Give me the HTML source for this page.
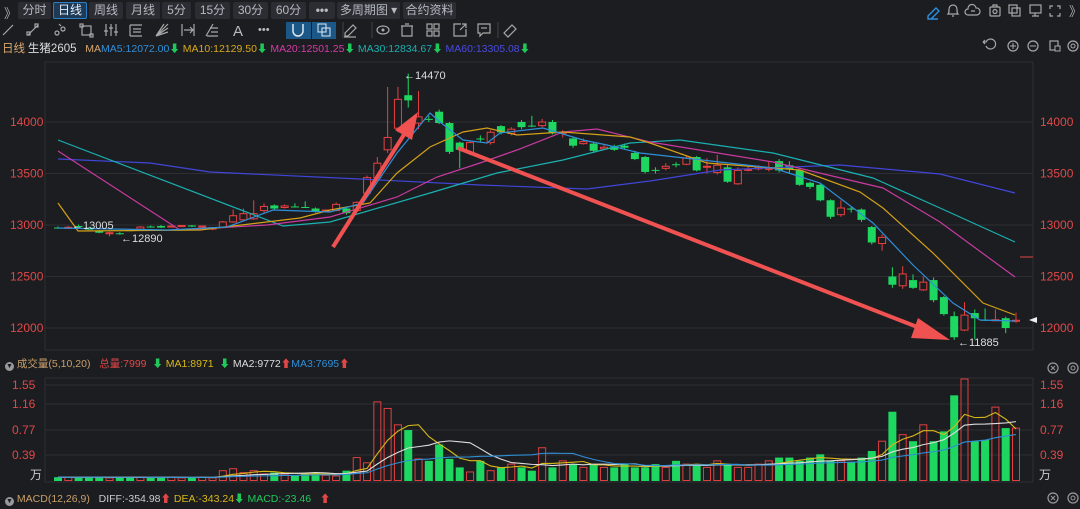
<!DOCTYPE html>
<html><head><meta charset="utf-8">
<style>
body{margin:0;width:1080px;height:509px;background:#1c1d21;overflow:hidden;font-family:"Liberation Sans","Noto Sans CJK SC",sans-serif;position:relative}
.b{position:absolute;top:2px;height:17px;background:#2b2d32;color:#b5b9c0;font-size:12px;line-height:17px;text-align:center;border-radius:2px}
.b.a{background:#1d3a57;border:1px solid #2d7fc5;color:#e8eef5;height:15px;line-height:15px}
.t{position:absolute;font-size:10.5px;white-space:nowrap}
.c{display:inline-block;width:9px;height:9px;border-radius:50%;background:#999;color:#1c1d21;font-size:7px;line-height:9px;text-align:center;vertical-align:-1px}
svg{position:absolute;left:0;top:0}
</style></head><body>
<div class="t" style="left:4px;top:3px;color:#aaa;font-size:13px">》</div>
<div class="b" style="left:18px;width:33px">分时</div>
<div class="b a" style="left:53px;width:32px">日线</div>
<div class="b" style="left:89px;width:34px">周线</div>
<div class="b" style="left:126px;width:34px">月线</div>
<div class="b" style="left:162px;width:29px">5分</div>
<div class="b" style="left:195px;width:35px">15分</div>
<div class="b" style="left:233px;width:35px">30分</div>
<div class="b" style="left:271px;width:35px">60分</div>
<div class="b" style="left:309px;width:26px;font-weight:bold">•••</div>
<div class="b" style="left:337px;width:63px">多周期图 ▾</div>
<div class="b" style="left:403px;width:53px">合约资料</div>
<div style="position:absolute;left:286px;top:22px;width:25px;height:17px;background:#1b5787"></div>
<div style="position:absolute;left:312px;top:22px;width:24px;height:17px;background:#1b5787"></div>
<div class="t" style="left:2px;top:40px;font-size:10.5px"><span style="color:#d8a870;font-size:11.5px">日线</span> <span style="color:#ddd;font-size:11.5px">生猪2605</span> &nbsp;&nbsp;<span style="color:#d8a870">MA</span><span style="color:#2f8fd8">MA5:12072.00</span><span style="color:#1ec85a">⬇</span> <span style="color:#d8a818">MA10:12129.50</span><span style="color:#1ec85a">⬇</span> <span style="color:#d83aa8">MA20:12501.25</span><span style="color:#1ec85a">⬇</span> <span style="color:#1ab0b0">MA30:12834.67</span><span style="color:#1ec85a">⬇</span> <span style="color:#4a4ae0">MA60:13305.08</span><span style="color:#1ec85a">⬇</span></div>
<div class="t" style="left:5px;top:356px"><span class="c">▼</span> <span style="color:#c8a06a">成交量(5,10,20)</span> &nbsp;&nbsp;<span style="color:#e04848">总量:7999</span> &nbsp;<span style="color:#1ec85a">⬇</span> <span style="color:#d8b818">MA1:8971</span> &nbsp;<span style="color:#1ec85a">⬇</span> <span style="color:#ddd">MA2:9772</span><span style="color:#e04848">⬆</span><span style="color:#2f8fd8">MA3:7695</span><span style="color:#e04848">⬆</span></div>
<div class="t" style="left:5px;top:491px"><span class="c">▼</span> <span style="color:#c8a06a">MACD(12,26,9)</span> &nbsp;&nbsp;<span style="color:#ccc">DIFF:-354.98</span><span style="color:#e04848">⬆</span> <span style="color:#d8b818">DEA:-343.24</span><span style="color:#1ec85a">⬇</span> <span style="color:#1ec85a">MACD:-23.46</span> &nbsp;&nbsp;<span style="color:#e04848">⬆</span></div>
<svg id="s" width="1080" height="509"></svg>
<script>
var NS='http://www.w3.org/2000/svg',S=document.getElementById('s'),h='';
function yp(p){return 122+(14000-p)*0.103}
function yv(v){return 480.5-v*65.5}
var st='fill="none" stroke="#a8a8a8" stroke-width="1.2"';
var ic=[8,33,60,86,111,136,162,188,212,238,265,298,324,350,383,407,433,460,484,510];
ic.forEach(function(x,i){var y=30;
 if(i==0)h+='<line x1="'+(x-5)+'" y1="'+(y+5)+'" x2="'+(x+5)+'" y2="'+(y-5)+'" '+st+'/>';
 else if(i==1)h+='<path d="M'+(x-5)+' '+(y+5)+'L'+(x+5)+' '+(y-5)+'" '+st+'/><rect x="'+(x-6)+'" y="'+(y+2)+'" width="3" height="3" '+st+'/><rect x="'+(x+2)+'" y="'+(y-6)+'" width="3" height="3" '+st+'/>';
 else if(i==2)h+='<circle cx="'+(x-3)+'" cy="'+(y+3)+'" r="2" '+st+'/><circle cx="'+(x+3)+'" cy="'+(y-1)+'" r="2" '+st+'/><path d="M'+(x-1)+' '+(y-6)+'l2 2" '+st+'/>';
 else if(i==3)h+='<rect x="'+(x-4)+'" y="'+(y-4)+'" width="9" height="9" '+st+'/><rect x="'+(x-6)+'" y="'+(y-6)+'" width="3" height="3" '+st+'/><rect x="'+(x+4)+'" y="'+(y+4)+'" width="3" height="3" '+st+'/>';
 else if(i==4)h+='<path d="M'+(x-5)+' '+(y-6)+'v12M'+x+' '+(y-6)+'v12M'+(x+5)+' '+(y-6)+'v12M'+(x-7)+' '+(y+1)+'h4M'+(x-2)+' '+(y-2)+'h4M'+(x+3)+' '+(y+2)+'h4" '+st+'/>';
 else if(i==5)h+='<path d="M'+(x-6)+' '+(y-5)+'h12M'+(x-3)+' '+(y-1)+'h8M'+(x-3)+' '+(y+2)+'h8M'+(x-6)+' '+(y+6)+'h12M'+(x-6)+' '+(y-5)+'v11" '+st+'/>';
 else if(i==6)h+='<path d="M'+(x-6)+' '+(y+6)+'L'+(x+6)+' '+(y-6)+'M'+(x-6)+' '+(y+6)+'L'+(x+6)+' '+(y-2)+'M'+(x-6)+' '+(y+6)+'L'+(x+6)+' '+(y+2)+'M'+(x-6)+' '+(y+6)+'L'+(x+2)+' '+(y-6)+'" '+st+'/>';
 else if(i==7)h+='<path d="M'+(x-6)+' '+(y-6)+'v12M'+(x+6)+' '+(y-6)+'v12M'+(x-4)+' '+y+'h9M'+(x+2)+' '+(y-3)+'l3 3-3 3" '+st+'/>';
 else if(i==8)h+='<path d="M'+(x-6)+' '+(y+6)+'L'+(x+1)+' '+(y-6)+'M'+(x-2)+' '+(y-2)+'h8M'+(x-1)+' '+(y+2)+'h7M'+(x-5)+' '+(y+6)+'h11" '+st+'/>';
 else if(i==9)h+='<text x="'+(x-5)+'" y="'+(y+6)+'" fill="#bbb" font-size="15" font-family="Liberation Sans">A</text>';
 else if(i==10)h+='<text x="'+(x-7)+'" y="'+(y+3)+'" fill="#bbb" font-size="11">•••</text>';
 else if(i==11)h+='<path d="M'+(x-5)+' '+(y-6)+'v7a5 5 0 0 0 10 0v-7" fill="none" stroke="#e0e8f0" stroke-width="1.5"/>';
 else if(i==12)h+='<rect x="'+(x-6)+'" y="'+(y-6)+'" width="8" height="8" fill="none" stroke="#e0e8f0"/><rect x="'+(x-2)+'" y="'+(y-2)+'" width="8" height="8" fill="none" stroke="#e0e8f0"/>';
 else if(i==13)h+='<path d="M'+(x-5)+' '+(y+3)+'l8-8 3 3-8 8h-3zM'+(x-6)+' '+(y+7)+'h12" '+st+'/>';
 else if(i==14)h+='<ellipse cx="'+x+'" cy="'+y+'" rx="6" ry="4" '+st+'/><circle cx="'+x+'" cy="'+y+'" r="1.5" fill="#aaa"/>';
 else if(i==15)h+='<path d="M'+(x-6)+' '+(y-4)+'h12M'+(x-2)+' '+(y-6)+'h4M'+(x-5)+' '+(y-4)+'v10h10v-10" '+st+'/>';
 else if(i==16)h+='<rect x="'+(x-6)+'" y="'+(y-6)+'" width="5" height="5" '+st+'/><rect x="'+(x+1)+'" y="'+(y-6)+'" width="5" height="5" '+st+'/><rect x="'+(x-6)+'" y="'+(y+1)+'" width="5" height="5" '+st+'/><rect x="'+(x+1)+'" y="'+(y+1)+'" width="5" height="5" '+st+'/>';
 else if(i==17)h+='<path d="M'+(x+1)+' '+(y-6)+'h-7v12h12v-7M'+x+' '+y+'l6-6M'+(x+2)+' '+(y-6)+'h4v4" '+st+'/>';
 else if(i==18)h+='<path d="M'+(x-6)+' '+(y-6)+'h12v9h-7l-3 3v-3h-2z" '+st+'/><path d="M'+(x-3)+' '+(y-2)+'h6" '+st+'/>';
 else h+='<path d="M'+(x-6)+' '+(y+3)+'l8-8 4 4-8 8z" '+st+'/>';
});
h+='<line x1="343" y1="22" x2="343" y2="38" stroke="#444"/><line x1="372" y1="22" x2="372" y2="38" stroke="#444"/><line x1="498" y1="22" x2="498" y2="38" stroke="#444"/>';
h+='<path d="M928 16l8-8 3 3-8 8h-3z M928 19h10" fill="none" stroke="#2d8fe0" stroke-width="1.4"/>';
h+='<path d="M948 14c1-1 1-2 1-5a4 4 0 0 1 8 0c0 3 0 4 1 5z M952 16h2" '+st+'/>';
h+='<path d="M968 15a3 3 0 0 1 0-6a4 4 0 0 1 8-1a3 3 0 0 1 1 7z M971 11h4" '+st+'/>';
h+='<rect x="990" y="7" width="10" height="9" rx="1" '+st+'/><circle cx="995" cy="11.5" r="2" '+st+'/><path d="M993 7v-2h4v2" '+st+'/>';
h+='<rect x="1009" y="5" width="8" height="8" '+st+'/><rect x="1012" y="8" width="8" height="8" '+st+'/>';
h+='<rect x="1030" y="5" width="11" height="8" '+st+'/><path d="M1035 13v3M1032 16h7" '+st+'/>';
h+='<path d="M1050 9V6h3M1057 6h3v3M1060 13v3h-3M1053 16h-3v-3" '+st+'/>';
h+='<text x="1069" y="16" fill="#aaa" font-size="13">》</text>';
h+='<path d="M986 46a5 5 0 1 0 0-4h-3m0 0l2-2m-2 2l2 2" '+st+'/>';
[1013,1033].forEach(function(x,i){h+='<circle cx="'+x+'" cy="46" r="5" '+st+'/><line x1="'+(x-3)+'" y1="46" x2="'+(x+3)+'" y2="46" stroke="#aaa"/>'+(i==0?'<line x1="'+x+'" y1="43" x2="'+x+'" y2="49" stroke="#aaa"/>':'')});
h+='<rect x="1050" y="41" width="8" height="9" '+st+'/><rect x="1055" y="46" width="5" height="5" fill="#1c1d21" stroke="#aaa"/>';
h+='<circle cx="1073" cy="46" r="5" '+st+'/><circle cx="1073" cy="46" r="2" fill="none" stroke="#aaa"/>';
[368,498].forEach(function(y){h+='<circle cx="1053" cy="'+y+'" r="5" fill="none" stroke="#999" stroke-width="1.2"/><path d="M1051 '+(y-2)+'l4 4m0-4l-4 4" stroke="#999"/><circle cx="1073" cy="'+y+'" r="5" fill="none" stroke="#999" stroke-width="1.2"/><circle cx="1073" cy="'+y+'" r="2" fill="none" stroke="#999"/>'});
h+='<path d="M45 62H1033V350H45Z" fill="none" stroke="#2c2e33"/>';
[14000,13500,13000,12500,12000].forEach(function(p){var y=yp(p);h+='<line x1="45" y1="'+y+'" x2="1033" y2="'+y+'" stroke="#2c2e33"/>';
 h+='<text x="10" y="'+(y+4)+'" fill="#e04848" font-size="12">'+p+'</text><text x="1040" y="'+(y+4)+'" fill="#e04848" font-size="12">'+p+'</text>';});
h+='<path d="M45 378H1033V482H45Z" fill="none" stroke="#2c2e33"/>';
[[1.55,385],[1.16,404],[0.77,430],[0.39,455]].forEach(function(a){h+='<line x1="45" y1="'+a[1]+'" x2="1033" y2="'+a[1]+'" stroke="#2c2e33"/><text x="12" y="'+(a[1]+4)+'" fill="#e04848" font-size="12">'+a[0].toFixed(2)+'</text><text x="1040" y="'+(a[1]+4)+'" fill="#e04848" font-size="12">'+a[0].toFixed(2)+'</text>'});
h+='<text x="30" y="479" fill="#ccc" font-size="12">万</text><text x="1039" y="479" fill="#ccc" font-size="12">万</text>';
h+='<line x1="1020" y1="257" x2="1033" y2="257" stroke="#e04848"/><path d="M1029 320l8-3v6z" fill="#eee"/>';
var L=[[12975,12975,12985,12965],[12975,12978,12990,12965],[12990,12985,13005,12975],[12975,12955,12980,12950],[12945,12925,12950,12920],[12915,12925,12935,12890],[12920,12918,12930,12905],[12950,12945,12960,12940],[12960,12980,12990,12955],[12985,12980,12995,12975],[12990,12975,13000,12970],[12980,12990,12995,12975],[12985,12995,13000,12980],[12995,12985,13000,12980],[12980,12990,12995,12975],[12960,12975,12980,12950],[12975,13030,13040,12970],[13030,13090,13150,13020],[13050,13110,13160,13040],[13060,13110,13240,13050],[13140,13180,13210,13120],[13190,13160,13200,13150],[13170,13185,13200,13160],[13180,13175,13210,13170],[13175,13170,13230,13165],[13160,13130,13170,13120],[13140,13145,13150,13130],[13140,13200,13220,13135],[13160,13115,13170,13100],[13140,13220,13230,13135],[13310,13460,13480,13300],[13460,13600,13660,13450],[13730,13850,14340,13700],[13940,14220,14340,13900],[14260,14210,14470,14140],[13990,14050,14300,13930],[14030,14030,14060,14000],[14100,13990,14120,13980],[13990,13710,14000,13690],[13800,13730,13810,13550],[13700,13800,13820,13680],[13840,13830,13870,13810],[13800,13900,13920,13780],[13960,13900,13970,13880],[13890,13930,13950,13870],[14000,13950,14020,13930],[13965,13965,14060,13950],[13965,14000,14030,13950],[14000,13890,14020,13880],[13890,13900,13920,13850],[13840,13770,13850,13750],[13790,13810,13840,13780],[13790,13720,13800,13700],[13740,13755,13780,13730],[13760,13730,13780,13720],[13770,13750,13790,13740],[13700,13640,13720,13630],[13660,13515,13670,13500],[13535,13535,13560,13500],[13550,13570,13600,13530],[13590,13585,13610,13560],[13590,13650,13670,13580],[13660,13530,13670,13520],[13570,13570,13650,13500],[13510,13580,13680,13490],[13560,13420,13580,13410],[13400,13530,13560,13390],[13540,13540,13570,13520],[13545,13560,13580,13530],[13550,13550,13620,13520],[13620,13530,13640,13510],[13580,13540,13620,13500],[13530,13390,13540,13380],[13410,13370,13420,13350],[13390,13240,13400,13230],[13240,13080,13250,13060],[13100,13165,13240,13080],[13160,13150,13180,13120],[13150,13050,13160,13030],[12980,12830,12990,12810],[12820,12880,12910,12750],[12500,12420,12590,12390],[12410,12525,12600,12380],[12465,12390,12520,12380],[12370,12445,12500,12360],[12465,12270,12490,12250],[12300,12135,12310,12120],[12115,11910,12160,11885],[11980,12125,12250,11970],[12145,12095,12180,11890],[12080,12080,12190,12070],[12080,12080,12180,12070],[12095,12000,12110,11950],[12065,12075,12150,12050]];
var V=[.05,.05,.04,.06,.05,.04,.05,.05,.05,.04,.05,.05,.04,.05,.05,.04,.15,.18,.12,.15,.1,.12,.1,.08,.1,.12,.08,.07,.15,.35,.27,1.2,1.1,.85,.77,.33,.3,.55,.33,.2,.13,.3,.15,.2,.25,.2,.15,.5,.2,.3,.25,.2,.25,.2,.2,.25,.2,.2,.25,.2,.3,.25,.25,.2,.3,.25,.2,.2,.25,.3,.35,.35,.3,.35,.4,.3,.3,.28,.35,.45,.6,1.05,.7,.6,.85,.6,.75,1.3,1.55,.6,.62,1.12,.8,.8];
var N=L.length;function X(i){return 58+i*(958/(N-1))}
var vb='';
L.forEach(function(c,i){var x=X(i),o=c[0],cl=c[1],up=cl>o;var col=up?'#e8403f':'#1ed760';if(cl==o){up=i%2==1;col=up?'#e8403f':'#1ed760';}
 var t=yp(Math.max(o,cl)),b=yp(Math.min(o,cl)),hh=Math.max(b-t,1);
 h+='<line x1="'+x+'" y1="'+yp(c[2])+'" x2="'+x+'" y2="'+yp(c[3])+'" stroke="'+col+'"/>';
 if(up)h+='<rect x="'+(x-3.5)+'" y="'+t+'" width="7" height="'+hh+'" fill="#1c1d21" stroke="'+col+'"/>';
 else h+='<rect x="'+(x-4)+'" y="'+t+'" width="8" height="'+hh+'" fill="'+col+'"/>';
 var v=V[i]||.1,vy=yv(v);
 if(up)vb+='<rect x="'+(x-3.5)+'" y="'+vy+'" width="7" height="'+(480.5-vy)+'" fill="none" stroke="#e04040"/>';
 else vb+='<rect x="'+(x-4)+'" y="'+vy+'" width="8" height="'+(481-vy)+'" fill="#1ed760"/>';
});
h+=vb;
function ma(n,col){var p='';for(var i=0;i<N;i++){var s=0,k=0;for(var j=i-n+1;j<=i;j++){s+=(j<0?.05:V[j]);k++}p+=X(i)+','+yv(s/k)+' '}h+='<polyline points="'+p+'" fill="none" stroke="'+col+'" stroke-width="1.1"/>'}
ma(5,'#d8b818');ma(10,'#dddddd');ma(20,'#2f8fd8');
function pl(pts,col){h+='<polyline points="'+pts+'" fill="none" stroke="'+col+'" stroke-width="1.2"/>'}
pl('58,159 150,163 210,172 360,179 480,185 587,189 650,181 720,170 840,165 940,174 1015,193','#4046d8');
pl('58,140 283,226 330,222 430,193 497,173 563,160 630,143 680,140 773,153 873,178 940,208 1015,242','#1ab0b0');
pl('58,151 180,230 267,225 330,217 397,197 437,177 480,163 517,150 563,132 597,129 650,142 773,162 883,188 940,222 1015,277','#c83aa0');
pl('58,203 78,231 200,230 300,218 330,210 370,203 397,173 430,147 463,132 487,128 517,135 563,132 630,137 650,143 707,163 800,170 860,192 883,208 933,253 983,303 1015,315','#d4a017');
pl('58,228 167,230 227,227 273,210 330,212 363,203 397,153 430,113 440,122 463,140 487,143 500,133 543,128 583,140 607,145 640,153 773,168 820,183 873,223 913,265 953,303 980,320 1015,321','#2e8fd8');
h+='<line x1="333" y1="247" x2="405" y2="133" stroke="#f05252" stroke-width="4"/><path d="M418 112L395 130L412 140Z" fill="#f05252"/>';
h+='<line x1="458" y1="148" x2="925" y2="330" stroke="#f05252" stroke-width="4"/><path d="M950 340L918 318L911 338Z" fill="#f05252"/>';
h+='<text x="404" y="79" fill="#ddd" font-size="11">←14470</text><text x="958" y="346" fill="#ddd" font-size="11">←11885</text><text x="72" y="229" fill="#ddd" font-size="11">←13005</text><text x="121" y="242" fill="#ddd" font-size="11">←12890</text>';
S.innerHTML=h;
</script>
</body></html>
